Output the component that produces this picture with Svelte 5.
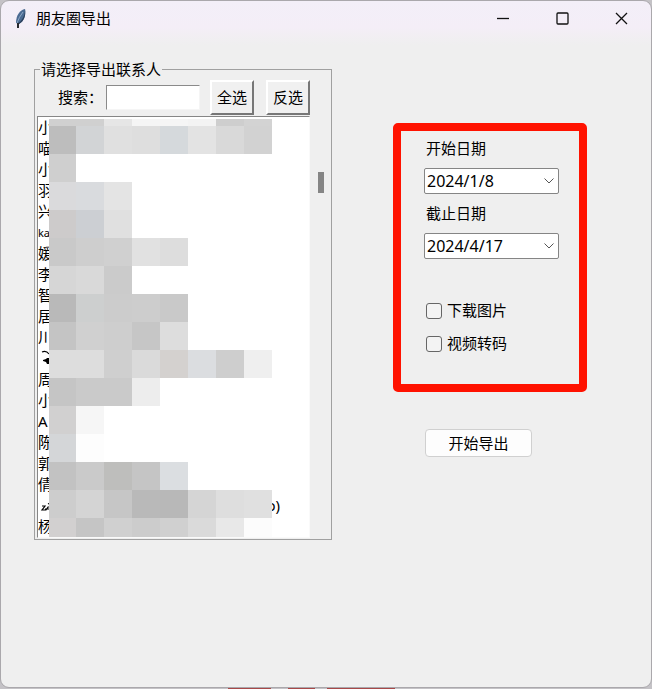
<script lang="ts">
	let search = '';
	let startDate = '2024/1/8';
	let endDate = '2024/4/17';
	let downloadImages = false;
	let transcodeVideo = false;

	type Contact = { name: string; mark?: string; blob?: string; small?: boolean; tail?: string };

	const contacts: Contact[] = [
		{ name: '小' },
		{ name: '喵' },
		{ name: '小' },
		{ name: '羽' },
		{ name: '兴' },
		{ name: 'ka', small: true },
		{ name: '媛' },
		{ name: '李' },
		{ name: '智' },
		{ name: '居' },
		{ name: '川' },
		{ name: '', mark: 'M4 4q4-2 7 2', blob: 'M5 12l3-1 1-1 3 0v6h-3l-1-2-3-1z' },
		{ name: '周' },
		{ name: '小' },
		{ name: 'A' },
		{ name: '陈' },
		{ name: '郭' },
		{ name: '倩' },
		{ name: '', mark: 'M4 11h3l-3 4h4l2-3h3M7 14h5M10 9l2-1', tail: 'o)' },
		{ name: '杨' }
	];

	// one entry per row of blocks, left to right
	const mosaic = [
		['#d0d0d0', '#d0d0d0', '#e6e6e6', '#f5f5f5', '#f5f5f5', '#f3f3f3', '#cecece', '#d3d3d3'],
		['#bdbdbd', '#d2d4d6', '#e0e0e0', '#dedede', '#d5d9dc', '#e3e3e3', '#d9d9d9', '#d2d2d2'],
		['#cfcfcf'],
		['#dadadc', '#d9dbde', '#e4e4e4'],
		['#cdcbcb', '#cccfd3', '#e0e0e0'],
		['#c9c9c9', '#cecece', '#d0d0d0', '#e1e1e1', '#dddddd'],
		['#d6d6d6', '#d9d9d9', '#cbcbcb'],
		['#b9b9b9', '#cdcfcf', '#cccccc', '#cdcdcd', '#c9c9c9'],
		['#c4c4c4', '#d0d0d0', '#cecece', '#c6c6c6', '#dddddd'],
		['#dddddd', '#dddddd', '#cfcfcf', '#dadada', '#d4d1cf', '#dbdde0', '#cecece', '#efefef'],
		['#c5c5c5', '#cacaca', '#cacaca', '#ededed'],
		['#d1d0d0', '#f6f6f6'],
		['#d4d6d8', '#fdfdfd'],
		['#c2c2c2', '#cacaca', '#bebebc', '#c5c5c5', '#dbdee1'],
		['#cdcdcd', '#d4d4d4', '#c6c6c6', '#b9b9b9', '#b8b8b8', '#d5d5d5', '#dedede', '#e0e0e0'],
		['#d2d0d0', '#c5c5c5', '#d0d0d0', '#cccccc', '#d0d0d0', '#dadada', '#e8e8e8', '#fcfcfc']
	];
</script>

<div class="desktop">
	<div class="window">
		<header class="titlebar">
			<svg width="16" height="20" viewBox="0 0 16 20" aria-hidden="true">
				<path d="M13 0C8 1 4 6 4 14l3 1c5-3 7-8 6-15z" fill="#4a6a92" />
				<path d="M13 0C13 7 10 12 5 15h2c5-3 7-8 6-15z" fill="#2b405c" />
				<path d="M11 3Q7 8 5 14" fill="none" stroke="#8fa9c6" />
				<path d="M6 14v5" stroke="#26292e" stroke-width="2" fill="none" />
			</svg>
			<h1>朋友圈导出</h1>
			<div class="window-controls">
				<button type="button" aria-label="最小化">
					<svg width="13" height="13" viewBox="0 0 13 13"><path d="M0 6.5h12" /></svg>
				</button>
				<button type="button" aria-label="最大化">
					<svg width="13" height="13" viewBox="0 0 13 13"><rect x="1" y="1" width="11" height="11" rx="1" /></svg>
				</button>
				<button type="button" aria-label="关闭">
					<svg width="13" height="13" viewBox="0 0 13 13"><path d="M1 1l11 11M12 1L1 12" /></svg>
				</button>
			</div>
		</header>

		<main>
			<fieldset>
				<legend>请选择导出联系人</legend>
				<div class="toolbar">
					<label for="search">搜索：</label>
					<input id="search" class="search" type="text" bind:value={search} />
					<button type="button" class="raised">全选</button>
					<button type="button" class="raised">反选</button>
				</div>
				<div class="list-area">
					<div class="list">
						<ul>
							{#each contacts as contact}
								<li class:small={contact.small}>
									{#if contact.mark}
										<svg width="16" height="21" viewBox="0 0 16 21" aria-hidden="true">
											<path d={contact.mark} />
											{#if contact.blob}
												<path class="blob" d={contact.blob} />
											{/if}
										</svg>
									{/if}
									{contact.name}
									{#if contact.tail}
										<span class="tail">{contact.tail}</span>
									{/if}
								</li>
							{/each}
						</ul>
						<div class="mosaic" aria-hidden="true">
							{#each mosaic as row}
								<div class="mosaic-row">
									{#each row as color}
										<i style="background: {color}"></i>
									{/each}
								</div>
							{/each}
						</div>
					</div>
					<div class="scrollbar"><div class="thumb"></div></div>
				</div>
			</fieldset>

			<div class="side">
				<section class="options">
					<label for="start">开始日期</label>
					<div class="combo">
						<select id="start" bind:value={startDate}>
							<option>2024/1/8</option>
						</select>
						<svg width="10" height="6" viewBox="0 0 10 6"><path d="M0.5 0.5L5 5l4.500-4.500" /></svg>
					</div>
					<label for="end">截止日期</label>
					<div class="combo">
						<select id="end" bind:value={endDate}>
							<option>2024/4/17</option>
						</select>
						<svg width="10" height="6" viewBox="0 0 10 6"><path d="M0.5 0.5L5 5l4.500-4.500" /></svg>
					</div>
					<div class="checks">
						<label class="check"><input type="checkbox" bind:checked={downloadImages} />下载图片</label>
						<label class="check"><input type="checkbox" bind:checked={transcodeVideo} />视频转码</label>
					</div>
				</section>
				<button type="button" class="export">开始导出</button>
			</div>
		</main>
	</div>
</div>

<style>
	:global(body) {
		margin: 0;
	}

	.desktop {
		box-sizing: border-box;
		min-height: 100vh;
		padding-bottom: 1px;
		display: flex;
		background:
			linear-gradient(90deg, transparent 228px, #a84848 228px 271px, transparent 271px 288px, #a84848 288px 315px, transparent 315px 327px, #a84848 327px 395px, transparent 395px) bottom / 100% 1px no-repeat,
			#c4c2c6;
		font-family: 'Noto Sans', 'Noto Sans CJK SC', sans-serif;
		font-size: 15px;
		line-height: 21px;
		color: #000;
	}

	button,
	input,
	select {
		font: inherit;
		color: inherit;
	}

	.window {
		flex: 1;
		min-width: 0;
		border: 1px solid #aaa8ac;
		border-radius: 9px;
		background: linear-gradient(#f3eff8, #f4eef7 26px, #efefef 44px);
	}

	.titlebar {
		display: flex;
		align-items: center;
		height: 35px;
		padding-left: 11px;
	}

	h1 {
		flex: 1;
		margin: 0 0 0 8px;
		font-size: 15px;
		font-weight: 400;
	}

	.window-controls {
		display: flex;
		height: 100%;
	}

	.window-controls button {
		display: flex;
		align-items: center;
		justify-content: center;
		width: 59px;
		padding: 0;
		border: 0;
		background: none;
	}

	.window-controls svg {
		fill: none;
		stroke: #111;
		stroke-width: 1.3;
	}

	main {
		display: flex;
		align-items: flex-start;
		gap: 61px;
		padding: 23px 64px 32px 33px;
	}

	fieldset {
		flex: 1;
		min-width: 0;
		margin: 0;
		padding: 0 1px 1px 2px;
		border: 1px solid #a0a0a0;
	}

	legend {
		margin-left: 3px;
		padding: 0 1px;
	}

	.toolbar {
		display: flex;
		align-items: center;
		height: 35px;
		padding: 0 0 1px 21px;
	}

	.search {
		flex: 1;
		box-sizing: border-box;
		min-width: 0;
		height: 25px;
		margin: 0 10px 0 3px;
		padding: 0 2px;
		border: 1px solid;
		border-color: #8a8a8a #f5f5f5 #f5f5f5 #8a8a8a;
		background: #fff;
	}

	.raised {
		width: 44px;
		height: 35px;
		padding: 0;
		border: 2px solid;
		border-color: #fff #777 #777 #fff;
		background: #f0f0f0;
	}

	.raised + .raised {
		margin: 0 20px 0 12px;
	}

	.list-area {
		display: flex;
	}

	.list {
		position: relative;
		flex: 1;
		min-width: 0;
		border: 1px solid;
		border-color: #868686 #fafafa #fafafa #868686;
		background: #fff;
	}

	ul {
		margin: 0;
		padding: 0;
		list-style: none;
	}

	li {
		display: flex;
		height: 21px;
	}

	li.small {
		font-size: 11px;
	}

	li svg {
		fill: none;
		stroke: #000;
		stroke-width: 1.2;
	}

	li .blob {
		fill: #000;
		stroke: none;
	}

	.tail {
		margin: 0 29px 0 auto;
	}

	.mosaic {
		position: absolute;
		inset: 2px 0 0 11px;
		display: flex;
		flex-direction: column;
	}

	.mosaic-row {
		display: flex;
		height: 28px;
	}

	.mosaic-row:first-child {
		height: 7px;
	}

	.mosaic-row:last-child {
		height: 19px;
	}

	.mosaic i {
		width: 28px;
	}

	.mosaic i:first-child {
		width: 27px;
	}

	.scrollbar {
		width: 20px;
		padding-top: 56px;
	}

	.thumb {
		width: 6px;
		height: 21px;
		margin-left: 8px;
		background: #858585;
	}

	.side {
		width: 194px;
		padding-top: 64px;
	}

	.options {
		display: flex;
		flex-direction: column;
		padding: 7px 20px 30px 23px;
		border: 8px solid #ff1200;
		border-radius: 5px;
	}

	.options label {
		padding-left: 2px;
	}

	.combo {
		display: grid;
		align-items: center;
		margin: 9px 0;
	}

	.combo select,
	.combo svg {
		grid-area: 1 / 1;
	}

	.combo select {
		appearance: none;
		width: 100%;
		height: 26px;
		padding: 0 2px;
		border: 1px solid #858585;
		border-radius: 2px;
		background: #fff;
		font-size: 16px;
	}

	.combo svg {
		justify-self: end;
		margin-right: 5px;
		fill: none;
		stroke: #555;
		pointer-events: none;
	}

	.checks {
		display: grid;
		gap: 12px;
		margin-top: 32px;
	}

	.check {
		display: flex;
		align-items: center;
		gap: 5px;
	}

	.check input {
		appearance: none;
		box-sizing: border-box;
		width: 16px;
		height: 16px;
		margin: 0;
		border: 1px solid #666;
		border-radius: 3px;
		background: #f3f3f3;
	}

	.check input:checked {
		background: #0067c0;
	}

	.export {
		display: block;
		width: 107px;
		height: 28px;
		margin: 37px 0 0 32px;
		padding: 0;
		border: 1px solid #d0d0d0;
		border-radius: 4px;
		background: #fdfdfd;
	}
</style>
